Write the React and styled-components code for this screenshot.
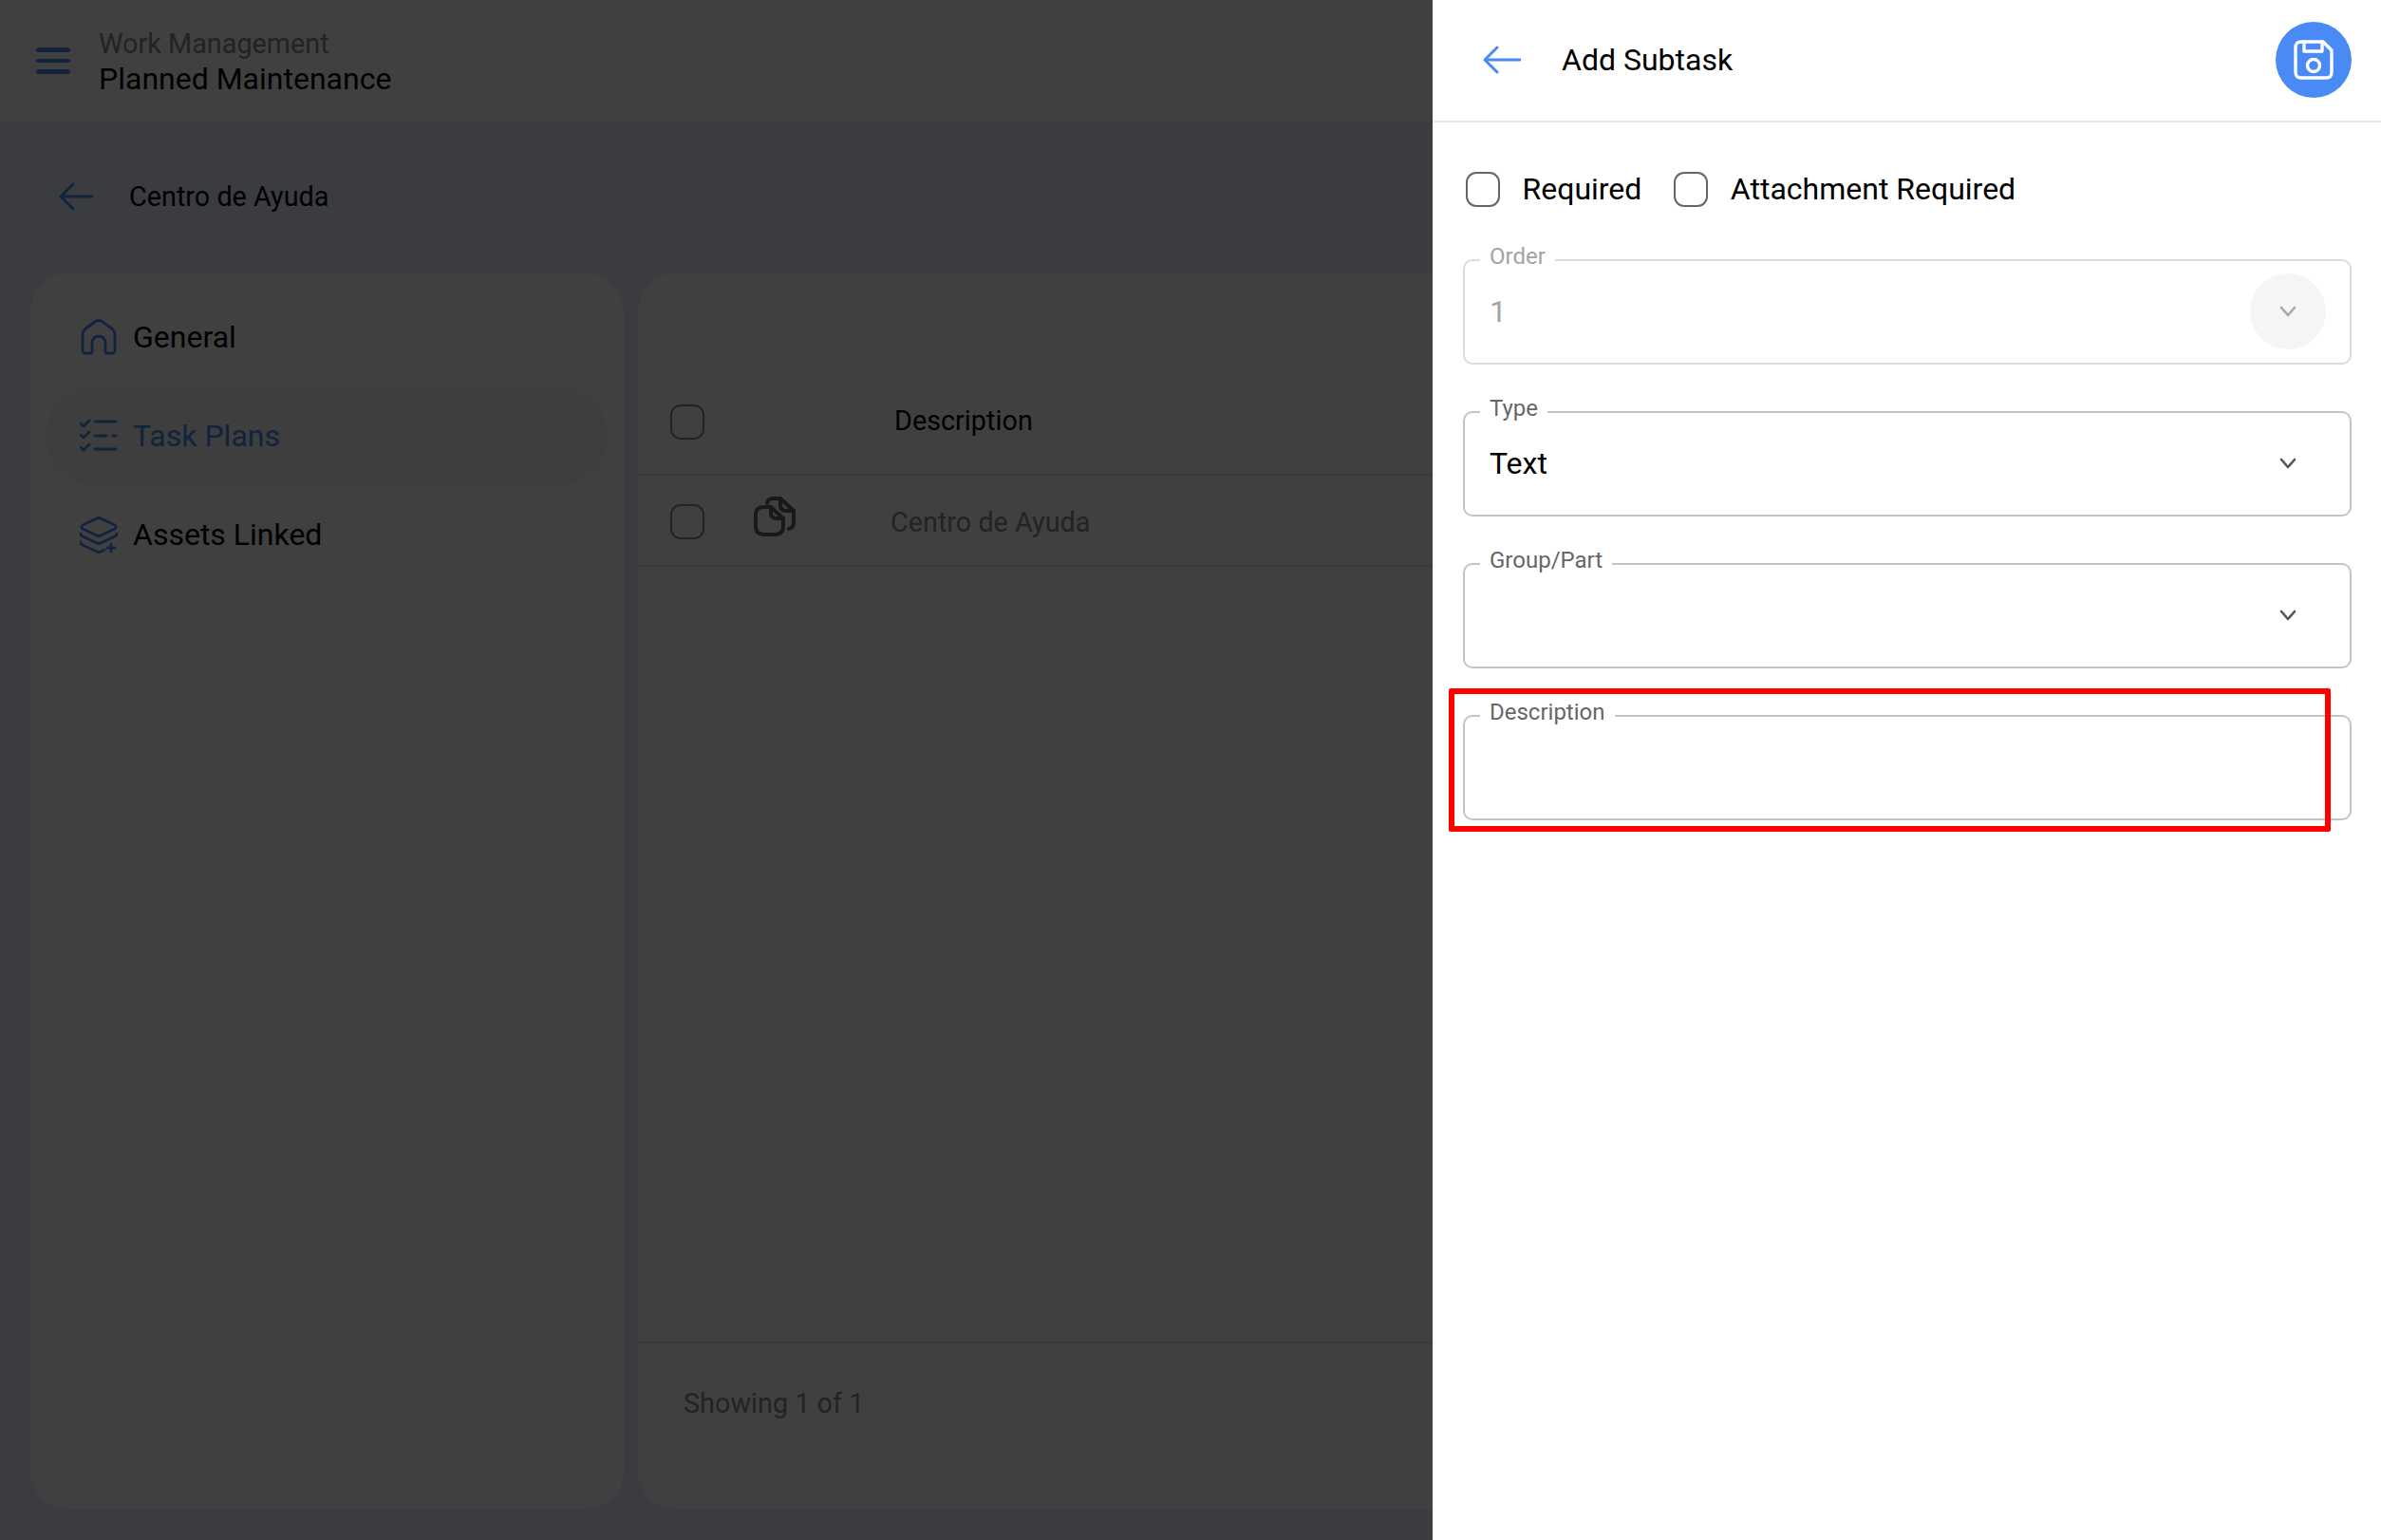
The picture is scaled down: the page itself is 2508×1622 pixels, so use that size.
import React from "react";
import styled, { createGlobalStyle } from "styled-components";

const GlobalStyle = createGlobalStyle`
  * { box-sizing: border-box; }
  html, body { margin: 0; height: 100%; overflow: hidden; }
  body { font-family: Roboto, "Liberation Sans", sans-serif; color: #000; }
`;

const Page = styled.div`
  height: 100vh;
  display: flex;
  flex-direction: column;
  background: #e6f0ff;
`;

const TopBar = styled.header`
  height: 128px;
  flex: none;
  display: flex;
  align-items: center;
  gap: 30px;
  padding-left: 38px;
  background: #fff;
`;

const Burger = styled.div`
  width: 36px;
  display: flex;
  flex-direction: column;
  gap: 7px;
  span {
    height: 4.5px;
    border-radius: 3px;
    background: #4a8af4;
  }
`;

const Titles = styled.div`
  display: flex;
  flex-direction: column;
  padding-top: 2px;
`;

const SmallTitle = styled.div`
  font-size: 28.8px;
  line-height: 37px;
  color: #8a8a8a;
`;

const BigTitle = styled.div`
  font-size: 32px;
  line-height: 37px;
`;

const SubHeader = styled.div`
  height: 160px;
  flex: none;
  display: flex;
  align-items: center;
  gap: 38px;
  padding: 0 0 3px 62px;
  font-size: 28.8px;
`;

const Columns = styled.div`
  flex: 1;
  min-height: 0;
  display: flex;
  gap: 15px;
  padding: 0 32px 32px;
`;

const SideCard = styled.nav`
  width: 625px;
  flex: none;
  padding: 15px 17px 0 16px;
  background: #fff;
  border-radius: 40px;
`;

const NavItem = styled.div`
  height: 104px;
  display: flex;
  align-items: center;
  gap: 16px;
  padding-left: 36px;
  font-size: 32px;
  border-radius: 52px;
  color: ${(p) => (p.$active ? "#4a8af4" : "#000")};
  background: ${(p) => (p.$active ? "#f6f6f6" : "transparent")};
`;

const NavIcon = styled.svg`
  width: 40px;
  height: 40px;
  flex: none;
  fill: none;
  stroke: #4a8af4;
  stroke-width: 2.8;
  stroke-linecap: round;
  stroke-linejoin: round;
`;

const TableCard = styled.section`
  flex: 1;
  min-width: 0;
  display: flex;
  flex-direction: column;
  background: #fff;
  border-radius: 40px;
  overflow: hidden;
`;

const TableTools = styled.div`
  height: 102px;
  flex: none;
`;

const TableRow = styled.div`
  height: ${(p) => (p.$head ? "111px" : "96px")};
  flex: none;
  display: flex;
  align-items: center;
  padding: ${(p) => (p.$head ? "0" : "3px")} 0 0 34px;
  border-bottom: 2px solid #ebebeb;
`;

const RowIconCell = styled.div`
  width: 200px;
  padding-left: 52px;
  display: flex;
  align-items: center;
`;

const HeadCell = styled.div`
  font-size: 28.8px;
  margin-top: -3px;
`;

const BodyCell = styled.div`
  font-size: 28.8px;
  color: #8c8c8c;
  margin-left: -4px;
`;

const CopyIcon = styled.svg`
  width: 44px;
  height: 44px;
  margin-top: -14px;
  fill: none;
  stroke: #666;
  stroke-width: 4;
  stroke-linecap: round;
  stroke-linejoin: round;
`;

const TableBody = styled.div`
  flex: 1;
`;

const TableFooter = styled.div`
  height: 177px;
  flex: none;
  padding: 46px 0 0 48px;
  border-top: 2px solid #ebebeb;
  font-size: 28.8px;
  line-height: 34px;
  color: #8c8c8c;
`;

const Scrim = styled.div`
  position: fixed;
  inset: 0;
  background: rgba(0, 0, 0, 0.75);
`;

const Drawer = styled.aside`
  position: fixed;
  top: 0;
  right: 0;
  bottom: 0;
  width: 999px;
  background: #fff;
`;

const DrawerHeader = styled.div`
  height: 129px;
  display: flex;
  align-items: center;
  gap: 43px;
  padding: 0 31px 2px 53px;
  border-bottom: 2px solid #e8e8e8;
`;

const BackIcon = styled.svg`
  width: ${(p) => p.$w || 40}px;
  height: 30px;
  flex: none;
  fill: none;
  stroke: #4a8af4;
  stroke-width: 3;
  stroke-linecap: round;
  stroke-linejoin: round;
`;

const DrawerTitle = styled.div`
  flex: 1;
  font-size: 32px;
`;

const SaveButton = styled.button`
  width: 80px;
  height: 80px;
  padding: 0;
  border: none;
  border-radius: 50%;
  background: #4a8af4;
  display: flex;
  align-items: center;
  justify-content: center;
`;

const SaveIcon = styled.svg`
  width: 42px;
  height: 42px;
  fill: none;
  stroke: #fff;
  stroke-width: 3.4;
  stroke-linecap: round;
  stroke-linejoin: round;
`;

const DrawerBody = styled.div`
  padding: 51px 31px 0 32px;
`;

const CheckRow = styled.div`
  display: flex;
  align-items: center;
  padding-left: 3px;
  margin-bottom: 38px;
  font-size: 32px;
`;

const CheckLabel = styled.div`
  margin: 0 34px 0 23.5px;
`;

const Box = styled.div`
  width: 36px;
  height: 37px;
  flex: none;
  border: 2px solid ${(p) => (p.$dim ? "#8c8c8c" : "#666")};
  border-radius: 11px;
`;

const FieldStack = styled.div`
  display: flex;
  flex-direction: column;
  gap: 32px;
`;

const FieldWrap = styled.div`
  position: relative;
`;

const Field = styled.fieldset`
  margin: 0;
  padding: 0 25px 14px 26px;
  min-width: 0;
  height: 128px;
  border: 2px solid ${(p) => (p.$disabled ? "#dcdcdc" : "#c4c4c4")};
  border-radius: 10px;
`;

const FieldLegend = styled.legend`
  margin-left: -10px;
  padding: 0 10px 8px;
  font-size: 24px;
  line-height: 28px;
  color: ${(p) => (p.$disabled ? "#a3a3a3" : "#666")};
`;

const FieldInner = styled.div`
  height: 80px;
  margin-top: -4px;
  display: flex;
  align-items: center;
  justify-content: space-between;
  font-size: 32px;
  color: ${(p) => (p.$disabled ? "#a3a3a3" : "#000")};
`;

const ChevronWrap = styled.div`
  width: 80px;
  height: 80px;
  flex: none;
  border-radius: 50%;
  display: flex;
  align-items: center;
  justify-content: center;
  background: ${(p) => (p.$disabled ? "#f5f5f5" : "transparent")};
  margin-left: auto;
`;

const Chevron = styled.svg`
  width: 18px;
  height: 12px;
  fill: none;
  stroke: ${(p) => (p.$disabled ? "#a8a8a8" : "#555")};
  stroke-width: 2.6;
  stroke-linecap: round;
  stroke-linejoin: round;
`;

const Highlight = styled.div`
  position: absolute;
  top: -11px;
  left: -15px;
  width: 929px;
  height: 151px;
  border: 6px solid #ff0000;
  border-radius: 2px;
`;

const fields = [
  { label: "Order", value: "1", disabled: true, select: true },
  { label: "Type", value: "Text", select: true },
  { label: "Group/Part", value: "", select: true },
  { label: "Description", value: "", marked: true },
];

const App = () => {
  return (
    <>
      <GlobalStyle />
      <Page>
        <TopBar>
          <Burger>
            <span />
            <span />
            <span />
          </Burger>
          <Titles>
            <SmallTitle>Work Management</SmallTitle>
            <BigTitle>Planned Maintenance</BigTitle>
          </Titles>
        </TopBar>
        <SubHeader>
          <BackIcon $w={36} viewBox="0 0 36 30">
            <path d="M35 15H2M15 2 2 15l13 13" />
          </BackIcon>
          Centro de Ayuda
        </SubHeader>
        <Columns>
          <SideCard>
            <NavItem>
              <NavIcon viewBox="0 0 40 40">
                <path d="M3 34V17q0-3 2-5L16 4q4-3 8 0l11 8q2 2 2 5v17q0 3-3 3h-5q-2 0-2-2v-9a7 7 0 0 0-14 0v9q0 2-2 2H6q-3 0-3-3Z" />
              </NavIcon>
              General
            </NavItem>
            <NavItem $active>
              <NavIcon viewBox="0 0 40 40">
                <path d="m1 7 3 3 6-6M1 19l3 3 6-6M1 32l3 3 6-6M16 5h22M16 20h12M35 20h3M16 34h22" />
              </NavIcon>
              Task Plans
            </NavItem>
            <NavItem>
              <NavIcon viewBox="0 0 40 40">
                <path d="M18 3 3 10q-2 2 0 4l15 7q2 1 4 0l15-7q2-2 0-4L22 3q-2-1-4 0ZM1 19q0 2 2 3l15 7q2 1 4 0l15-7q2-1 2-3M1 28q0 2 2 3l15 7q2 1 4 0l4-2M29 34h8M33 30v8" />
              </NavIcon>
              Assets Linked
            </NavItem>
          </SideCard>
          <TableCard>
            <TableTools />
            <TableRow $head>
              <Box $dim />
              <RowIconCell />
              <HeadCell>Description</HeadCell>
            </TableRow>
            <TableRow>
              <Box $dim />
              <RowIconCell>
                <CopyIcon viewBox="0 0 44 44">
                  <path d="M14 9q1-5 6-5h8l14 13v12q0 6-5 7" />
                  <path d="M28 4v7q0 6 6 6h8" />
                  <path d="M10 13h8l13 12v8q0 9-9 9H11q-9 0-9-9V21q0-8 8-8Z" />
                  <path d="M18 13v6q0 6 6 6h7" />
                </CopyIcon>
              </RowIconCell>
              <BodyCell>Centro de Ayuda</BodyCell>
            </TableRow>
            <TableBody />
            <TableFooter>Showing 1 of 1</TableFooter>
          </TableCard>
        </Columns>
      </Page>
      <Scrim />
      <Drawer>
        <DrawerHeader>
          <BackIcon viewBox="0 0 40 30">
            <path d="M39 15H2M15 2 2 15l13 13" />
          </BackIcon>
          <DrawerTitle>Add Subtask</DrawerTitle>
          <SaveButton>
            <SaveIcon viewBox="0 0 42 42">
              <path d="M8 2h23l9 9v23q0 6-6 6H8q-6 0-6-6V8q0-6 6-6Z" />
              <path d="M11 2v10h19V2" />
              <circle cx="21" cy="27" r="6.500" />
            </SaveIcon>
          </SaveButton>
        </DrawerHeader>
        <DrawerBody>
          <CheckRow>
            <Box />
            <CheckLabel>Required</CheckLabel>
            <Box />
            <CheckLabel>Attachment Required</CheckLabel>
          </CheckRow>
          <FieldStack>
            {fields.map((f) => (
              <FieldWrap key={f.label}>
                <Field $disabled={f.disabled}>
                  <FieldLegend $disabled={f.disabled}>{f.label}</FieldLegend>
                  <FieldInner $disabled={f.disabled}>
                    {f.value}
                    {f.select && (
                      <ChevronWrap $disabled={f.disabled}>
                        <Chevron $disabled={f.disabled} viewBox="0 0 18 12">
                          <path d="m2 2 7 8 7-8" />
                        </Chevron>
                      </ChevronWrap>
                    )}
                  </FieldInner>
                </Field>
                {f.marked && <Highlight />}
              </FieldWrap>
            ))}
          </FieldStack>
        </DrawerBody>
      </Drawer>
    </>
  );
};

export default App;
